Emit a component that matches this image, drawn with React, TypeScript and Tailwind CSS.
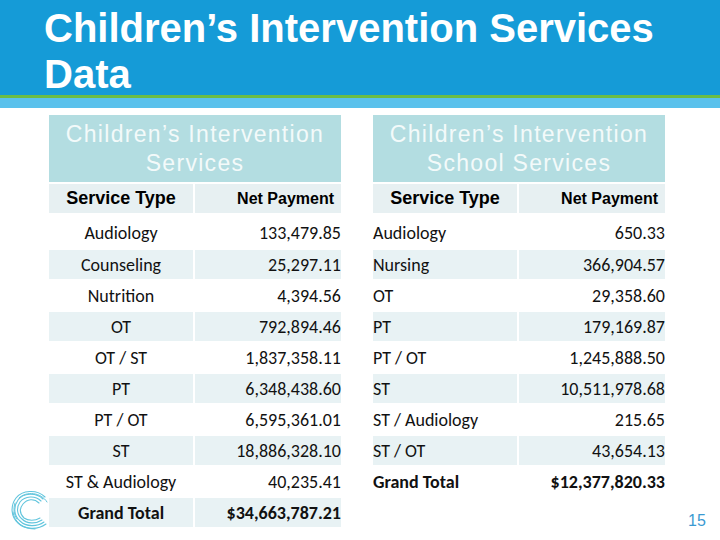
const left = [
  ["Audiology", "133,479.85"],
  ["Counseling", "25,297.11"],
  ["Nutrition", "4,394.56"],
  ["OT", "792,894.46"],
  ["OT / ST", "1,837,358.11"],
  ["PT", "6,348,438.60"],
  ["PT / OT", "6,595,361.01"],
  ["ST", "18,886,328.10"],
  ["ST & Audiology", "40,235.41"],
];

const right = [
  ["Audiology", "650.33"],
  ["Nursing", "366,904.57"],
  ["OT", "29,358.60"],
  ["PT", "179,169.87"],
  ["PT / OT", "1,245,888.50"],
  ["ST", "10,511,978.68"],
  ["ST / Audiology", "215.65"],
  ["ST / OT", "43,654.13"],
];

const body = "font-['Carlito','Lato',sans-serif] text-[18px] text-[#111] pt-[1px]";

function Table({
  title,
  rows,
  total,
  centerFirst,
}: {
  title: string[];
  rows: string[][];
  total: string;
  centerFirst: boolean;
}) {
  return (
    <div className="w-[292px] flex flex-col gap-[2px]">
      <div className="h-[67px] bg-[#b3dde1] flex flex-col items-center justify-center font-['Liberation_Sans',Arial,sans-serif] text-[23px] leading-[29px] tracking-[1.3px] text-[#f3fafa]">
        {title.map((t) => (
          <div key={t}>{t}</div>
        ))}
      </div>
      <div className="grid grid-cols-[144px_146px] gap-[2px]">
        <div className="h-[29px] bg-[#e7f0f2] flex items-center justify-center font-['Liberation_Sans',Arial,sans-serif] font-bold text-[18px] text-black">
          Service Type
        </div>
        <div className="h-[29px] bg-[#e7f0f2] flex items-center justify-end pr-[7px] font-['Liberation_Sans',Arial,sans-serif] font-bold text-[16px] text-black">
          Net Payment
        </div>
        {rows.map(([name, val], i) => {
          const bg = i % 2 === 1 ? "bg-[#e8f2f4]" : "bg-white";
          const h = i === 0 ? "h-[33px] pt-[3px]" : "h-[29px]";
          return [
            <div
              key={name + "a"}
              className={`${bg} flex items-center ${centerFirst ? "justify-center" : "justify-start"} ${body} ${h}`}
            >
              {name}
            </div>,
            <div key={name + "b"} className={`${bg} flex items-center justify-end ${body} ${h}`}>
              {val}
            </div>,
          ];
        })}
        <div
          className={`h-[29px] ${rows.length % 2 === 1 ? "bg-[#e8f2f4]" : "bg-white"} flex items-center ${centerFirst ? "justify-center" : "justify-start"} ${body} font-bold`}
        >
          Grand Total
        </div>
        <div
          className={`h-[29px] ${rows.length % 2 === 1 ? "bg-[#e8f2f4]" : "bg-white"} flex items-center justify-end ${body} font-bold`}
        >
          {total}
        </div>
      </div>
    </div>
  );
}

function Logo() {
  return (
    <svg width="40" height="42" viewBox="0 0 40 42" fill="none" stroke="#62c5dd" strokeLinecap="round">
      <path d="M35 8 C27 0 12 1 6 9 C0 17 1 28 8 34 C15 41 28 41 36 35" strokeWidth="1.1" />
      <path d="M33 10 C26 3 13 4 8 11 C3 18 4 27 10 32 C16 38 27 38 34 33" strokeWidth="1.1" />
      <path d="M31 12 C25 6 15 7 10 13 C6 19 7 26 12 30 C17 35 26 35 32 31" strokeWidth="1.1" />
      <path d="M29 14 C24 9 17 10 13 15 C9 20 10 25 14 29 C18 32 25 32 30 29" strokeWidth="1.1" />
      <path d="M37 13 C31 3 16 2 9 9" strokeWidth="1" />
      <path d="M3 23 C4 33 13 40 25 40" strokeWidth="1" />
      <path d="M5 14 C3 20 4 26 7 30" strokeWidth="1" />
    </svg>
  );
}

export default function App() {
  return (
    <div className="w-[720px] h-[540px] bg-white relative overflow-hidden">
      <div className="h-[95px] bg-[#159bd7] pl-[44px] pt-[5px]">
        <h1 className="font-['Liberation_Sans',Arial,sans-serif] font-bold text-[40px] leading-[46px] text-white">
          Children’s Intervention Services
          <br />
          Data
        </h1>
      </div>
      <div className="h-[3px] bg-[#6bbd45]" />
      <div className="h-[10px] bg-[#5ac1ec]" />
      <div className="flex gap-[32px] pl-[49px] pt-[7px]">
        <Table title={["Children’s Intervention", "Services"]} rows={left} total="$34,663,787.21" centerFirst />
        <Table
          title={["Children’s Intervention", "School Services"]}
          rows={right}
          total="$12,377,820.33"
          centerFirst={false}
        />
      </div>
      <div className="absolute left-[10px] top-[489px]">
        <Logo />
      </div>
      <div className="absolute left-[688px] top-[509px] font-['Liberation_Sans',Arial,sans-serif] text-[16px] text-[#3b9ad2]">
        15
      </div>
    </div>
  );
}
